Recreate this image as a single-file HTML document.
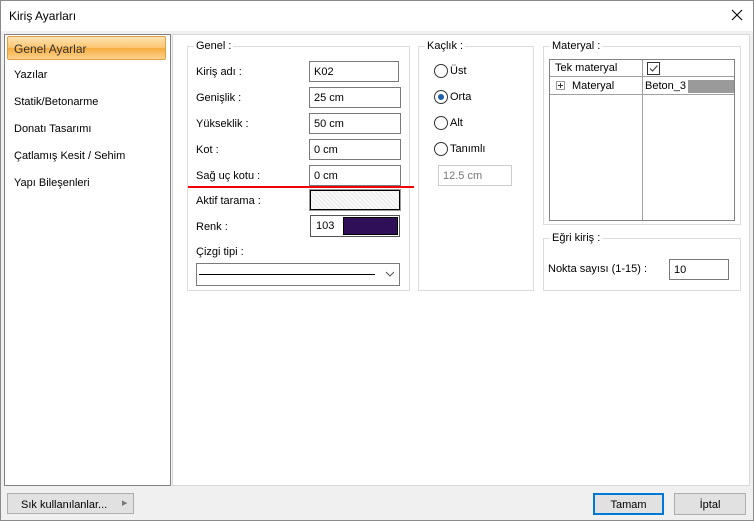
<!DOCTYPE html><html><head><meta charset="utf-8"><style>
*{box-sizing:border-box;margin:0;padding:0}
body{width:754px;height:521px;position:relative;background:#f0f0f0;font-family:"Liberation Sans",sans-serif;font-size:11px;color:#000;overflow:hidden}
.a{position:absolute}
.win{left:0;top:0;width:754px;height:521px;border:1px solid #8a8a8a}
.inp{position:absolute;background:#fff;border:1px solid #7a7a7a;padding:4px 0 0 4px;height:21px}
.grp{position:absolute;border:1px solid #dcdcdc}
.lg{position:absolute;top:-7px;left:6px;background:#fff;padding:0 2px}
.rad{position:absolute;width:14px;height:14px;border:1px solid #333;border-radius:50%;background:#fff}
.btn{position:absolute;border:1px solid #adadad;background:#e1e1e1;text-align:center;padding-top:4px}
</style></head><body>
<div class="a win"></div>
<div class="a" style="left:0;top:0;width:754px;height:31px;background:#fff;border:1px solid #8a8a8a;border-bottom:none"></div>
<div class="a" style="left:9px;top:9px;font-size:12px">Kiriş Ayarları</div>
<svg class="a" style="left:731px;top:9px" width="12" height="12"><path d="M1 1L11 11M11 1L1 11" stroke="#000" stroke-width="1.1"/></svg>
<div class="a" style="left:4px;top:34px;width:167px;height:452px;background:#fff;border:1px solid #828282"></div>
<div class="a" style="left:7px;top:36px;width:159px;height:24px;border:1px solid #e2a040;border-radius:2px;background:linear-gradient(#fde3b5,#fbc56e 50%,#f7ad3e 51%,#fbd28f)"></div>
<div class="a" style="left:14px;top:42px;color:#333;font-size:12px">Genel Ayarlar</div>
<div class="a" style="left:14px;top:69px">Yazılar</div>
<div class="a" style="left:14px;top:96px">Statik/Betonarme</div>
<div class="a" style="left:14px;top:123px">Donatı Tasarımı</div>
<div class="a" style="left:14px;top:150px">Çatlamış Kesit / Sehim</div>
<div class="a" style="left:14px;top:177px">Yapı Bileşenleri</div>
<div class="a" style="left:172px;top:34px;width:578px;height:452px;background:#fff;border:1px solid #d8d8d8"></div>

<div class="grp" style="left:187px;top:46px;width:223px;height:245px"><span class="lg">Genel :</span></div>
<div class="a" style="left:196px;top:66px">Kiriş adı :</div>
<div class="a" style="left:196px;top:92px">Genişlik :</div>
<div class="a" style="left:196px;top:118px">Yükseklik :</div>
<div class="a" style="left:196px;top:144px">Kot :</div>
<div class="a" style="left:196px;top:170px">Sağ uç kotu :</div>
<div class="inp" style="left:309px;top:61px;width:90px">K02</div>
<div class="inp" style="left:309px;top:87px;width:92px">25 cm</div>
<div class="inp" style="left:309px;top:113px;width:92px">50 cm</div>
<div class="inp" style="left:309px;top:139px;width:92px">0 cm</div>
<div class="inp" style="left:309px;top:165px;width:92px">0 cm</div>
<div class="a" style="left:188px;top:186px;width:226px;height:2px;background:#e00"></div>
<div class="a" style="left:196px;top:195px">Aktif tarama :</div>
<div class="a" style="left:310px;top:190px;width:90px;height:20px;border:1px solid #000;outline:1px solid #999;background:repeating-linear-gradient(45deg,#e8e8e8 0 1px,#fafafa 1px 3px)"></div>
<div class="a" style="left:196px;top:221px">Renk :</div>
<div class="a" style="left:310px;top:215px;width:90px;height:22px;border:1px solid #555;background:#fff"></div>
<div class="a" style="left:316px;top:220px">103</div>
<div class="a" style="left:343px;top:217px;width:55px;height:18px;background:#2f0f57;border:1px solid #000"></div>
<div class="a" style="left:196px;top:246px">Çizgi tipi :</div>
<div class="a" style="left:196px;top:263px;width:204px;height:23px;border:1px solid #7a7a7a;background:#fff"></div>
<div class="a" style="left:199px;top:274px;width:176px;height:1px;background:#000"></div>
<svg class="a" style="left:385px;top:271px" width="10" height="6"><path d="M1 1L5 5L9 1" stroke="#555" fill="none"/></svg>

<div class="grp" style="left:418px;top:46px;width:116px;height:245px"><span class="lg">Kaçlık :</span></div>
<div class="rad" style="left:434px;top:64px"></div><div class="a" style="left:450px;top:65px">Üst</div>
<div class="rad" style="left:434px;top:90px"></div><div class="a" style="left:438px;top:94px;width:6px;height:6px;border-radius:50%;background:#1b5fa8"></div><div class="a" style="left:450px;top:91px">Orta</div>
<div class="rad" style="left:434px;top:116px"></div><div class="a" style="left:450px;top:117px">Alt</div>
<div class="rad" style="left:434px;top:142px"></div><div class="a" style="left:450px;top:143px">Tanımlı</div>
<div class="inp" style="left:438px;top:165px;width:74px;border-color:#ccc;color:#777">12.5 cm</div>

<div class="grp" style="left:543px;top:46px;width:198px;height:179px"><span class="lg">Materyal :</span></div>
<div class="a" style="left:549px;top:59px;width:186px;height:162px;border:1px solid #828282;background:#fff"></div>
<div class="a" style="left:550px;top:76px;width:184px;height:1px;background:#a0a0a0"></div>
<div class="a" style="left:550px;top:94px;width:184px;height:1px;background:#a0a0a0"></div>
<div class="a" style="left:642px;top:60px;width:1px;height:160px;background:#a0a0a0"></div>
<div class="a" style="left:555px;top:62px">Tek materyal</div>
<div class="a" style="left:647px;top:62px;width:13px;height:13px;border:1px solid #333"></div>
<svg class="a" style="left:648px;top:63px" width="11" height="11"><path d="M2 5.5L4.5 8L9.5 2.5" stroke="#333" fill="none"/></svg>
<div class="a" style="left:556px;top:81px;width:9px;height:9px;border:1px solid #999"></div>
<div class="a" style="left:558px;top:85px;width:5px;height:1px;background:#333"></div>
<div class="a" style="left:560px;top:83px;width:1px;height:5px;background:#333"></div>
<div class="a" style="left:572px;top:80px">Materyal</div>
<div class="a" style="left:645px;top:80px">Beton_3</div>
<div class="a" style="left:688px;top:80px;width:46px;height:13px;background:#9a9a9a"></div>

<div class="grp" style="left:543px;top:238px;width:198px;height:53px"><span class="lg">Eğri kiriş :</span></div>
<div class="a" style="left:548px;top:263px">Nokta sayısı (1-15) :</div>
<div class="inp" style="left:669px;top:259px;width:60px">10</div>

<div class="btn" style="left:7px;top:493px;width:127px;height:21px;text-align:left;padding-left:13px;padding-top:5px">Sık kullanılanlar...<span style="position:absolute;left:114px;top:5px;font-size:7px;color:#777">▶</span></div>
<div class="btn" style="left:593px;top:493px;width:71px;height:22px;border:2px solid #0078d7;padding-top:4px">Tamam</div>
<div class="btn" style="left:674px;top:493px;width:72px;height:22px;padding-top:5px">İptal</div>
</body></html>
